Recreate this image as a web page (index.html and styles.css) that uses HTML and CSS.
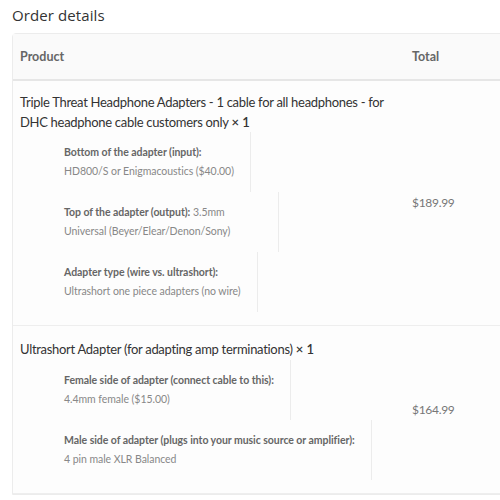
FILE: index.html
```html
<!DOCTYPE html>
<html>
<head>
<meta charset="utf-8">
<link rel="stylesheet" href="styles.css">
</head>
<body>
<h2 class="section-title">Order details</h2>
<table class="order-table">
  <thead>
    <tr>
      <th class="col-product">Product</th>
      <th class="col-total">Total</th>
    </tr>
  </thead>
  <tbody>
    <tr class="item-row">
      <td class="col-product">
        <div class="item-name">Triple Threat Headphone Adapters - 1 cable for all headphones - for DHC headphone cable customers only <span class="qty">× 1</span></div>
        <ul class="item-meta">
          <li><strong class="meta-label">Bottom of the adapter (input):</strong><p class="meta-value">HD800/S or Enigmacoustics ($40.00)</p></li>
          <li class="meta-wide"><strong class="meta-label">Top of the adapter (output):</strong> <span class="meta-value">3.5mm<br>Universal (Beyer/Elear/Denon/Sony)</span></li>
          <li><strong class="meta-label">Adapter type (wire vs. ultrashort):</strong><p class="meta-value">Ultrashort one piece adapters (no wire)</p></li>
        </ul>
      </td>
      <td class="col-total price">$189.99</td>
    </tr>
    <tr class="item-row">
      <td class="col-product">
        <div class="item-name">Ultrashort Adapter (for adapting amp terminations) <span class="qty">× 1</span></div>
        <ul class="item-meta">
          <li><strong class="meta-label">Female side of adapter (connect cable to this):</strong><p class="meta-value">4.4mm female ($15.00)</p></li>
          <li><strong class="meta-label">Male side of adapter (plugs into your music source or amplifier):</strong><p class="meta-value">4 pin male XLR Balanced</p></li>
        </ul>
      </td>
      <td class="col-total price">$164.99</td>
    </tr>
  </tbody>
</table>
</body>
</html>
```
FILE: styles.css
```css
html, body {
  margin: 0;
  padding: 0;
  overflow: hidden;
  background: #ffffff;
}
body {
  padding: 0 0 0 12px;
  font-family: Lato, "Open Sans", sans-serif;
  color: #3a3a3a;
}
.section-title {
  margin: 0;
  padding-top: 5px;
  height: 28px;
  font-family: "Open Sans", sans-serif;
  font-weight: 400;
  font-size: 15px;
  line-height: 20px;
  letter-spacing: 0.1px;
  color: #333;
}
.order-table {
  width: 540px;
  border-collapse: separate;
  border-spacing: 0;
  border: 1px solid #ececec;
  border-radius: 4px 0 0 0;
  background: #fdfdfd;
}
.order-table th {
  background: #fafafa;
  font-size: 12.5px;
  font-weight: 700;
  color: #666;
  text-align: left;
  height: 45px;
  padding: 0 7px;
  border-bottom: 2px solid #e6e6e6;
}
.col-product {
  width: 378px;
}
.order-table td {
  padding: 12px 7px 13px;
  vertical-align: middle;
  border-bottom: 1px solid #eeeeee;
}
.item-row:last-child td {
  padding-top: 14px;
}
.item-name {
  font-size: 13px;
  letter-spacing: -0.3px;
  line-height: 19.5px;
  color: #333;
}
.qty {
  font-weight: 600;
  letter-spacing: 0;
}
.item-meta {
  list-style: none;
  margin: 0;
  padding: 0 0 0 44px;
}
.item-meta li {
  width: fit-content;
  padding: 11px 16px 11px 0;
  border-right: 1px solid #ececec;
  font-size: 10.5px;
  line-height: 19px;
}
.item-meta li.meta-wide {
  width: 198px;
}
.meta-label {
  display: inline;
  font-weight: 700;
  letter-spacing: -0.05px;
  color: #666;
}
.meta-value {
  margin: 0;
  letter-spacing: -0.05px;
  color: #888;
}
.price {
  font-size: 12px;
  letter-spacing: -0.3px;
  color: #777;
}
```
